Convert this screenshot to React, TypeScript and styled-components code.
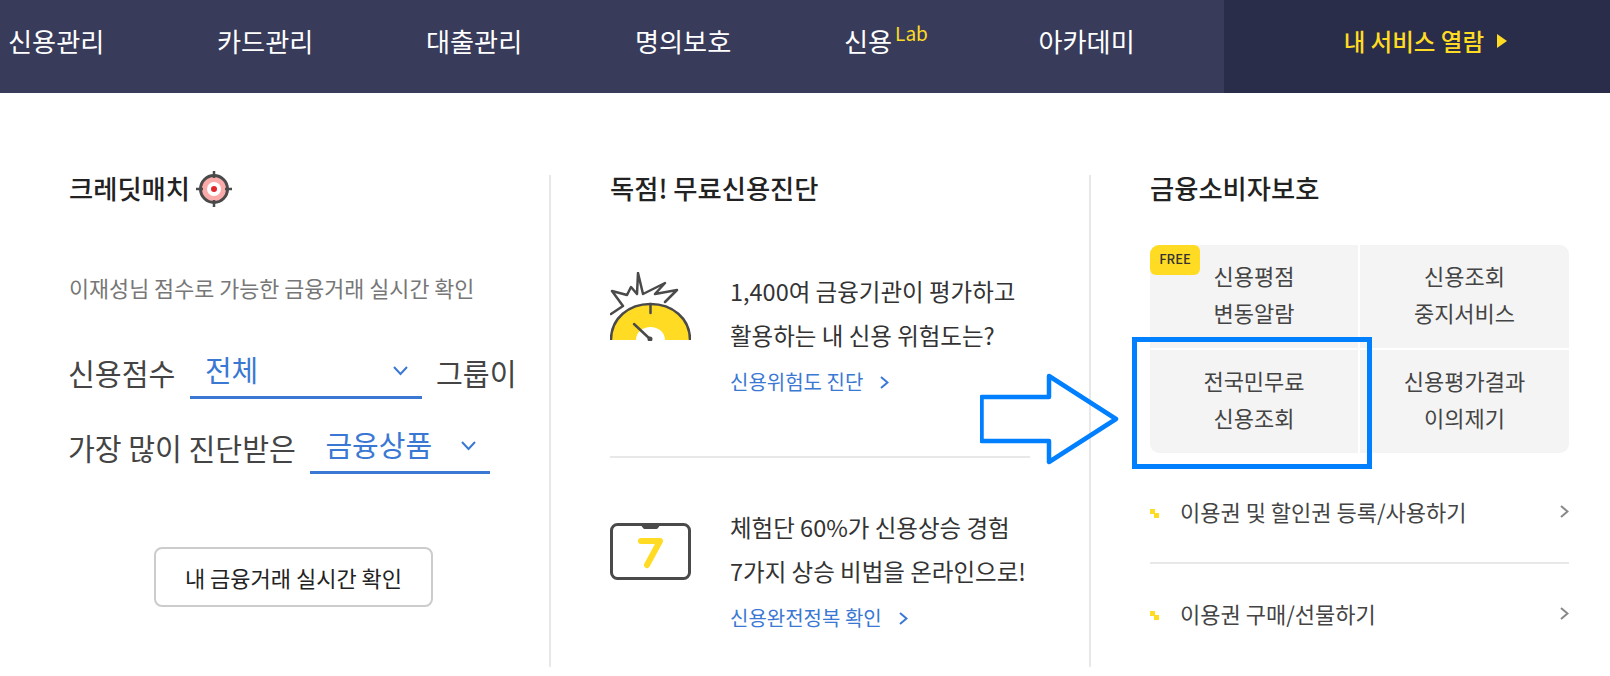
import React, { FunctionComponent } from 'react'
import styled, { createGlobalStyle } from 'styled-components'

const GlobalStyle = createGlobalStyle`
  html, body {
    margin: 0;
    padding: 0;
    background: #fff;
  }
  body {
    width: 1610px;
    height: 676px;
    overflow: hidden;
    font-family: "Noto Sans CJK KR", "Noto Sans", sans-serif;
  }
`

const Page = styled.div`
  width: 1610px;
  height: 676px;
  overflow: hidden;
`
const NavBar = styled.nav`
  display: flex;
  height: 93px;
  background: #383b5a;
`
const NavList = styled.div`
  display: flex;
  flex: 1;
  align-items: center;
  gap: 112.6px;
  padding: 0 0 12px 8px;
`
const NavItem = styled.a`
  color: #fff;
  font-size: 26.2px;
  line-height: 36px;
  white-space: nowrap;
`
const NavSup = styled.span`
  color: #ffdc23;
  font-size: 19px;
  line-height: 0;
  vertical-align: 11px;
  margin: 0 -2px 0 3px;
`
const ServiceOpen = styled.a`
  display: flex;
  align-items: center;
  justify-content: flex-end;
  gap: 13px;
  box-sizing: border-box;
  width: 386px;
  padding: 0 103px 12px 0;
  background: #2a2d4a;
  color: #ffdc23;
  font-size: 23.5px;
  font-weight: 500;
`
const Content = styled.main`
  display: grid;
  grid-template-columns: 480px 540px 1fr;
  margin: 82px 0 0 69px;
`
const Column = styled.section<{ $divided?: boolean }>`
  position: relative;
  box-sizing: border-box;
  height: 492px;
  padding-left: ${(props) => (props.$divided ? '59px' : '0')};
  border-left: ${(props) => (props.$divided ? '2px solid #e8e8e8' : 'none')};
`
const Title = styled.h2`
  display: flex;
  align-items: center;
  gap: 6px;
  margin: 0;
  height: 24px;
  color: #222;
  font-size: 26.3px;
  font-weight: 500;

  svg {
    margin-top: 3px;
  }
`
const SubText = styled.p`
  margin: 74px 0 47px;
  color: #777;
  font-size: 21.8px;
  line-height: 30px;
`
const FilterRow = styled.div`
  display: flex;
  align-items: flex-start;
  margin: 0 0 26px -1px;
`
const FilterLabel = styled.span`
  color: #444;
  font-size: 29.2px;
  line-height: 44px;
  white-space: nowrap;
`
const Select = styled.div<{ $width: number; $left: number }>`
  display: flex;
  align-items: center;
  justify-content: space-between;
  box-sizing: border-box;
  width: ${(props) => props.$width}px;
  height: 49px;
  margin: 0 14px 0 ${(props) => props.$left}px;
  padding: 0 14px 8px 15px;
  border-bottom: 3px solid #3a78d4;
  color: #3a78d4;
  font-size: 29px;

  svg {
    margin-top: 4px;
  }
`
const OutlineButton = styled.button`
  display: block;
  box-sizing: border-box;
  width: 279px;
  height: 60px;
  margin: 73px 0 0 85px;
  background: #fff;
  border: 2px solid #ccc;
  border-radius: 8px;
  color: #222;
  font-family: inherit;
  font-size: 22px;
`
const Promo = styled.div<{ $first?: boolean }>`
  display: flex;
  align-items: flex-start;
  gap: 39px;
  margin-top: ${(props) => (props.$first ? '70px' : '47px')};
`
const PromoIcon = styled.div<{ $offset: number }>`
  width: 81px;
  flex: none;
  margin-top: ${(props) => props.$offset}px;
`
const PromoText = styled.p`
  margin: 0;
  color: #333;
  font-size: 23.5px;
  line-height: 44px;
  white-space: nowrap;
`
const PromoLink = styled.a`
  display: flex;
  align-items: center;
  gap: 17px;
  margin-top: 2px;
  color: #3a78d4;
  font-size: 20px;
  line-height: 46px;
`
const PromoDivider = styled.hr`
  width: 420px;
  height: 2px;
  margin: 51px 0 0;
  border: 0;
  background: #e8e8e8;
`
const TileGrid = styled.div`
  position: relative;
  display: grid;
  grid-template-columns: 208px 209px;
  grid-template-rows: 103px 103px;
  gap: 2px;
  width: 419px;
  margin-top: 46px;
  border-radius: 9px;
  overflow: hidden;
`
const Tile = styled.a`
  display: flex;
  align-items: center;
  justify-content: center;
  padding-bottom: 5px;
  background: #f4f4f4;
  color: #444;
  font-size: 22px;
  line-height: 37px;
  text-align: center;
`
const FreeBadge = styled.span`
  position: absolute;
  top: 0;
  left: 0;
  width: 50px;
  height: 30px;
  background: #ffdc23;
  border-radius: 6px;
  color: #333;
  font-size: 13px;
  font-weight: 500;
  line-height: 28px;
  text-align: center;
`
const ServiceList = styled.ul`
  width: 419px;
  margin: 9px 0 0;
  padding: 0;
  list-style: none;
`
const ServiceRow = styled.li`
  display: flex;
  align-items: center;
  gap: 21px;
  padding: 35px 0 36px;
  border-bottom: 2px solid #e8e8e8;

  &:last-child {
    border-bottom: 0;
  }

  svg:first-child {
    margin-top: 4px;
  }

  svg:last-child {
    margin-left: auto;
  }
`
const ServiceLabel = styled.span`
  margin-top: -1px;
  color: #444;
  font-size: 22px;
  line-height: 30px;
`
const HighlightBox = styled.div`
  position: absolute;
  left: 41px;
  top: 162px;
  box-sizing: border-box;
  width: 240px;
  height: 132px;
  border: 5px solid #007fff;
`
const ArrowMark = styled.svg`
  position: absolute;
  left: -111px;
  top: 198px;
`

const Chevron: FunctionComponent<{ dir: 'down' | 'right'; color: string }> = ({ dir, color }) =>
  dir === 'down' ? (
    <svg width="15" height="10" viewBox="0 0 15 10">
      <polyline points="1,1 7.5,8 14,1" fill="none" stroke={color} strokeWidth="2" />
    </svg>
  ) : (
    <svg width="9" height="13" viewBox="0 0 9 13">
      <polyline points="1,1 7.5,6.5 1,12" fill="none" stroke={color} strokeWidth="2" />
    </svg>
  )

const TargetIcon = () => (
  <svg width="36" height="36" viewBox="0 0 36 36">
    <circle cx="18" cy="18" r="13.5" fill="#fbaaaa" stroke="#4a4a4a" strokeWidth="3" />
    <circle cx="18" cy="18" r="7" fill="#fff" />
    <circle cx="18" cy="18" r="3" fill="#e3262e" />
    <path d="M18 0v7M18 29v7M0 18h7M29 18h7" stroke="#4a4a4a" strokeWidth="2.5" />
  </svg>
)

const GaugeIcon = () => (
  <svg width="81" height="69" viewBox="0 0 81 69" style={{ display: 'block' }}>
    <polyline
      points="1,42 13,34 2,19 17,23 21,15 27,22 28,1 33,22 55,11 45,22 67,18 55,30"
      fill="none"
      stroke="#4a4a4a"
      strokeWidth="2.5"
      strokeLinejoin="round"
      strokeLinecap="round"
    />
    <path d="M1 68C1 46 19 32 40.5 32S80 46 80 68H55C55 60 48 55 40.5 55S26 60 26 68Z" fill="#ffdc23" />
    <path d="M1 68C1 46 19 32 40.5 32S80 46 80 68" fill="none" stroke="#4a4a4a" strokeWidth="2.5" />
    <path d="M40.5 32v9M24 52L40 67" stroke="#4a4a4a" strokeWidth="2.5" strokeLinecap="round" />
    <circle cx="40" cy="67" r="2.5" fill="#4a4a4a" />
  </svg>
)

const SevenIcon = () => (
  <svg width="81" height="57" viewBox="0 0 81 57" style={{ display: 'block' }}>
    <rect x="1.5" y="1.5" width="78" height="54" rx="6" fill="#fff" stroke="#4a4a4a" strokeWidth="3" />
    <path d="M30 1h21l-3 4a2 2 0 0 1-2 1H35a2 2 0 0 1-2-1Z" fill="#4a4a4a" />
    <polyline
      points="31,18 50,18 37,42"
      fill="none"
      stroke="#ffdc23"
      strokeWidth="6"
      strokeLinejoin="round"
      strokeLinecap="round"
    />
  </svg>
)

const SquareBullet = () => (
  <svg width="9" height="9" viewBox="0 0 9 9">
    <rect x="0" y="0" width="5" height="5" fill="#ffdc23" />
    <rect x="4" y="4" width="5" height="5" fill="#ffdc23" />
  </svg>
)

const navItems = ['신용관리', '카드관리', '대출관리', '명의보호']

const App: FunctionComponent = () => {
  return (
    <Page>
      <GlobalStyle />
      <NavBar>
        <NavList>
          {navItems.map((item) => (
            <NavItem key={item}>{item}</NavItem>
          ))}
          <NavItem>
            신용<NavSup>Lab</NavSup>
          </NavItem>
          <NavItem>아카데미</NavItem>
        </NavList>
        <ServiceOpen>
          내 서비스 열람
          <svg width="10" height="14" viewBox="0 0 10 14">
            <polygon points="0,0 10,7 0,14" fill="#ffdc23" />
          </svg>
        </ServiceOpen>
      </NavBar>
      <Content>
        <Column>
          <Title>
            크레딧매치 <TargetIcon />
          </Title>
          <SubText>이재성님 점수로 가능한 금융거래 실시간 확인</SubText>
          <FilterRow>
            <FilterLabel>신용점수</FilterLabel>
            <Select $width={232} $left={14.5}>
              전체
              <Chevron dir="down" color="#3a78d4" />
            </Select>
            <FilterLabel>그룹이</FilterLabel>
          </FilterRow>
          <FilterRow>
            <FilterLabel>가장 많이 진단받은</FilterLabel>
            <Select $width={180} $left={14.5}>
              금융상품
              <Chevron dir="down" color="#3a78d4" />
            </Select>
          </FilterRow>
          <OutlineButton>내 금융거래 실시간 확인</OutlineButton>
        </Column>
        <Column $divided>
          <Title>독점! 무료신용진단</Title>
          <Promo $first>
            <PromoIcon $offset={3}>
              <GaugeIcon />
            </PromoIcon>
            <div>
              <PromoText>
                1,400여 금융기관이 평가하고
                <br />
                활용하는 내 신용 위험도는?
              </PromoText>
              <PromoLink>
                신용위험도 진단
                <Chevron dir="right" color="#3a78d4" />
              </PromoLink>
            </div>
          </Promo>
          <PromoDivider />
          <Promo>
            <PromoIcon $offset={18}>
              <SevenIcon />
            </PromoIcon>
            <div>
              <PromoText>
                체험단 60%가 신용상승 경험
                <br />
                7가지 상승 비법을 온라인으로!
              </PromoText>
              <PromoLink>
                신용완전정복 확인
                <Chevron dir="right" color="#3a78d4" />
              </PromoLink>
            </div>
          </Promo>
        </Column>
        <Column $divided>
          <Title>금융소비자보호</Title>
          <TileGrid>
            <Tile>
              신용평점
              <br />
              변동알람
            </Tile>
            <Tile>
              신용조회
              <br />
              중지서비스
            </Tile>
            <Tile>
              전국민무료
              <br />
              신용조회
            </Tile>
            <Tile>
              신용평가결과
              <br />
              이의제기
            </Tile>
            <FreeBadge>FREE</FreeBadge>
          </TileGrid>
          <ServiceList>
            <ServiceRow>
              <SquareBullet />
              <ServiceLabel>이용권 및 할인권 등록/사용하기</ServiceLabel>
              <Chevron dir="right" color="#888" />
            </ServiceRow>
            <ServiceRow>
              <SquareBullet />
              <ServiceLabel>이용권 구매/선물하기</ServiceLabel>
              <Chevron dir="right" color="#888" />
            </ServiceRow>
          </ServiceList>
          <HighlightBox />
          <ArrowMark width="139" height="92" viewBox="0 0 139 92">
            <path d="M1.5 24H69V3L136 46L69 89V68H1.5Z" fill="none" stroke="#007fff" strokeWidth="4.5" strokeLinejoin="round" />
          </ArrowMark>
        </Column>
      </Content>
    </Page>
  )
}

export default App
